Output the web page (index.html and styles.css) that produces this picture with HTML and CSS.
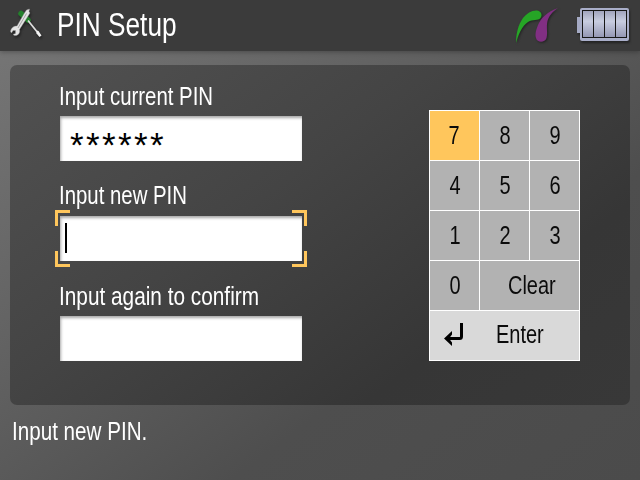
FILE: index.html
```html
<!DOCTYPE html>
<html lang="en">
<head>
<meta charset="utf-8">
<title>PIN Setup</title>
<link rel="stylesheet" href="styles.css">
</head>
<body>
<header class="bar">
  <svg class="tools" width="38" height="34" viewBox="0 0 38 34">
    <path d="M12 5.500L19 12" stroke="#23802b" stroke-width="5.500" stroke-linecap="round"/>
    <path d="M19 12.500L29 25" stroke="#ddd" stroke-width="1.800"/>
    <path d="M27.500 22.500l2 .5 3 4.500 -2 1.500 -3 -3.500z" fill="#f4f4f4"/>
    <path d="M17.500 2L20.500 1L20 3.500L21 5L10.500 21.500C11.500 25 9 28 5.500 27.500L4 26.500L6.500 25.500L6.500 22.500L4 22.500L2.500 25L1.500 23.500C2 20 4.500 18 8 18L15.500 5Z" fill="#e4e4e4" stroke="#999" stroke-width=".4"/>
    <path d="M17.500 5.500L9 20" stroke="#a5a5a5" stroke-width="1"/>
  </svg>
  <h1 class="title"><span class="narrow">PIN Setup</span></h1>
  <svg class="brand" width="46" height="38" viewBox="0 0 46 38">
    <path d="M4 36C4 27 6 18 11 11C15 6 20 3 25 3.500C29 4 31 8 28.500 11C26 14 21 12 16 15C10 19 6 28 4 36Z" fill="#26a526"/>
    <path d="M46 1C35 5 29 11 26 18C23.500 24 23 28 24 31C25 36 33 36 34.500 31C36 26 34 20 35.500 14C37 9 40 5 46 1Z" fill="#812f83"/>
  </svg>
  <svg class="battery" width="56" height="38" viewBox="0 0 56 38">
    <defs><linearGradient id="cell" x2="0" y2="1"><stop offset="0" stop-color="#9fa2bc"/><stop offset=".4" stop-color="#c8cde0"/><stop offset="1" stop-color="#9396b3"/></linearGradient></defs>
    <path d="M1 11h4v16H1z" fill="#a5aac4"/>
    <rect x="4" y="2" width="49" height="33" rx="2" fill="#a9aec9"/>
    <rect x="6.500" y="4.500" width="44" height="27" fill="url(#cell)" stroke="#171717"/>
    <path d="M17.500 4v28M28.500 4v28M39.500 4v28" stroke="#171717"/>
  </svg>
</header>
<main class="panel">
  <form class="fields">
    <label class="label"><span class="narrow">Input current PIN</span></label>
    <div class="field"><span class="stars">******</span></div>
    <label class="label raised"><span class="narrow">Input new PIN</span></label>
    <div class="field active"><i class="caret"></i><i class="corner tl"></i><i class="corner tr"></i><i class="corner bl"></i><i class="corner br"></i></div>
    <label class="label wide"><span class="narrow">Input again to confirm</span></label>
    <div class="field"></div>
  </form>
  <div class="keypad">
    <div class="key selected"><span>7</span></div><div class="key"><span>8</span></div><div class="key"><span>9</span></div>
    <div class="key"><span>4</span></div><div class="key"><span>5</span></div><div class="key"><span>6</span></div>
    <div class="key"><span>1</span></div><div class="key"><span>2</span></div><div class="key"><span>3</span></div>
    <div class="key"><span>0</span></div><div class="key clear"><span>Clear</span></div>
    <div class="key enter"><svg width="20" height="24" viewBox="0 0 20 24"><path d="M17.500 0V13.500Q17.500 15.500 15.500 15.500H4" fill="none" stroke="#000" stroke-width="3"/><path d="M0 15.500L8 8V11.500L5 15.500L8 19.500V23Z"/></svg><span>Enter</span></div>
  </div>
</main>
<footer class="hint"><span class="narrow">Input new PIN.</span></footer>
</body>
</html>
```
FILE: styles.css
```css
* { box-sizing: border-box; }
body {
  margin: 0;
  width: 640px;
  height: 480px;
  overflow: hidden;
  display: flex;
  flex-direction: column;
  background: linear-gradient(143deg, #787878 0%, #636363 35%, #4e4e4e 68%, #4b4b4b 100%);
  font: 25px/30px "Liberation Sans", Arial, sans-serif;
  color: #fff;
}
.bar {
  height: 51px;
  flex: none;
  display: flex;
  background: #3b3b3b;
  box-shadow: 0 1px 5px rgba(0, 0, 0, .3);
}
.tools { margin: 8px 0 0 9px; filter: drop-shadow(1px 2px 1px #222); }
.title { margin: 6px 0 0 10px; width: 458px; font-size: 33px; line-height: 38px; font-weight: normal; }
.narrow { display: inline-block; white-space: nowrap; transform: scaleX(.815); transform-origin: 0 0; }
.title .narrow { transform: scaleX(.795); }
.brand { margin: 7px 0 0 -3px; overflow: visible; filter: drop-shadow(1px 1px 1px #222); }
.battery { margin: 6px 0 0 18px; filter: drop-shadow(1px 2px 1px #222); }
.bar svg { flex: none; }
.panel {
  margin: 14px 10px 0;
  height: 340px;
  flex: none;
  display: flex;
  justify-content: space-between;
  padding: 16px 50px 0 50px;
  border-radius: 7px;
  background: linear-gradient(143deg, #515151 0%, #444 40%, #363636 75%, #383838 100%);
}
.fields { width: 242px; }
.label { display: block; height: 35px; margin-left: -1px; }
.raised { height: 36px; margin-top: -1px; }
.wide .narrow { transform: scaleX(.832); }
.field {
  position: relative;
  height: 45px;
  margin-bottom: 20px;
  background: #fff;
  box-shadow: inset 1px 2px 3px rgba(0, 0, 0, .35);
}
.stars {
  display: block;
  height: 45px;
  padding: 8px 0 0 10px;
  font-size: 35px;
  line-height: 42px;
  letter-spacing: 2.4px;
  color: #000;
}
.caret { position: absolute; left: 5px; top: 7px; width: 2px; height: 30px; background: #000; }
.corner { position: absolute; width: 15px; height: 16px; border: 0 solid #ffc65c; }
.tl { left: -5px; top: -6px; border-width: 3px 0 0 3px; }
.tr { right: -5px; top: -6px; border-width: 3px 3px 0 0; }
.bl { left: -5px; bottom: -6px; border-width: 0 0 3px 3px; }
.br { right: -5px; bottom: -6px; border-width: 0 3px 3px 0; }
.keypad {
  display: grid;
  grid-template-columns: repeat(3, 49px);
  grid-template-rows: repeat(5, 49px);
  gap: 1px;
  padding: 1px;
  width: 151px;
  height: 251px;
  margin-top: 29px;
  background: #fff;
  color: #0b0b0b;
}
.key { display: flex; justify-content: center; padding-top: 9px; background: #b2b2b2; }
.key span { display: block; transform: scaleX(.8); }
.selected { padding-right: 2px; background: #ffc65c; }
.clear { grid-column: span 2; }
.clear span { margin-left: 4px; }
.enter { grid-column: span 3; justify-content: flex-start; padding-top: 8px; background: #d9d9d9; }
.enter svg { margin: 4px 0 0 14px; }
.enter span { margin-left: 26px; }
.hint { padding: 11px 0 0 12px; }
.hint .narrow { transform: scaleX(.825); }
```
